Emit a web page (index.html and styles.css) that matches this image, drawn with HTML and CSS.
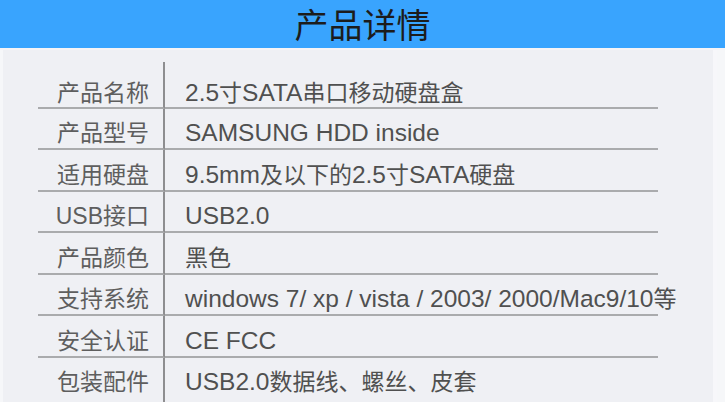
FILE: index.html
```html
<!DOCTYPE html>
<html lang="zh-CN">
<head>
  <meta charset="UTF-8">
  <title>产品详情</title>
  <link rel="stylesheet" href="styles.css">
</head>
<body>
  <header class="banner">
    <h1>产品详情</h1>
  </header>

  <main class="panel">
    <div class="spec">
      <div class="label">产品名称</div>
      <div class="value">2.5<span class="zh">寸</span>SATA<span class="zh">串口移动硬盘盒</span></div>

      <div class="label">产品型号</div>
      <div class="value">SAMSUNG HDD inside</div>

      <div class="label">适用硬盘</div>
      <div class="value">9.5mm<span class="zh">及以下的</span>2.5<span class="zh">寸</span>SATA<span class="zh">硬盘</span></div>

      <div class="label">USB接口</div>
      <div class="value">USB2.0</div>

      <div class="label">产品颜色</div>
      <div class="value"><span class="zh">黑色</span></div>

      <div class="label">支持系统</div>
      <div class="value">windows 7/ xp / vista / 2003/ 2000/Mac9/10<span class="zh">等</span></div>

      <div class="label">安全认证</div>
      <div class="value">CE FCC</div>

      <div class="label">包装配件</div>
      <div class="value">USB2.0<span class="zh">数据线、螺丝、皮套</span></div>
    </div>
  </main>
</body>
</html>
```

FILE: styles.css
```css
html, body {
  margin: 0;
  height: 100%;
}

body {
  background: #f6f7f9;
  font-family: "Liberation Sans", "Noto Sans CJK SC", sans-serif;
  overflow: hidden;
}

.banner {
  height: 48px;
  background: #39a4fe;
  border-bottom: 2px solid #f7f4f6;
  display: flex;
  align-items: center;
  justify-content: center;
}

.banner h1 {
  margin: 0;
  font-family: "Noto Sans CJK SC", sans-serif;
  font-weight: 400;
  font-size: 34px;
  line-height: 1;
  color: #1c1c1c;
}

.panel {
  margin: 0 8px 0 3px;
  background: #eff0f4;
  border-right: 4px solid #f7f7fa;
  padding: 12px 0 0 35px;
  height: 352px;
  box-sizing: border-box;
}

.spec {
  width: 620px;
  display: grid;
  grid-template-columns: 127px minmax(0, 1fr);
  grid-template-rows: 47px 41px 42px 41px 42px 41px 42px 60px;
}

.spec > div {
  box-sizing: border-box;
  display: flex;
  align-items: center;
  padding-top: 9px;
  line-height: 28px;
  border-bottom: 2px solid #aaabad;
  white-space: nowrap;
}

.spec > div:nth-child(1),
.spec > div:nth-child(2) {
  padding-top: 17px;
}

.spec > div:nth-last-child(1),
.spec > div:nth-last-child(2) {
  border-bottom: none;
  align-items: flex-start;
  padding-top: 10px;
}

.label {
  justify-content: flex-end;
  padding-right: 14px;
  border-right: 2px solid #8e8e90;
  font-size: 23px;
  color: #5e5e5e;
}

.value {
  padding-left: 20px;
  font-size: 24.5px;
  color: #505050;
}

.value .zh {
  font-size: 23px;
}
```
